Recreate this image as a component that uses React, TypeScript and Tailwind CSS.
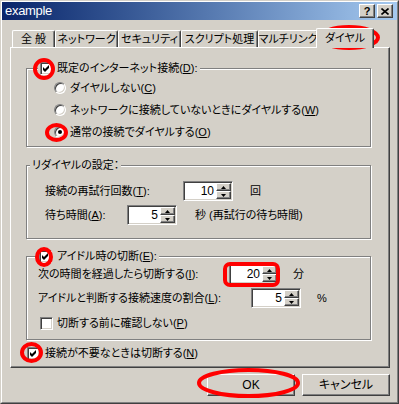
import React from "react";

const face = "bg-[#d4d0c8]";
const raised =
  "border border-t-white border-l-white border-r-[#404040] border-b-[#404040] shadow-[inset_-1px_-1px_0_#808080]";
const sunken =
  "border border-t-[#808080] border-l-[#808080] border-r-white border-b-white shadow-[inset_1px_1px_0_#404040,inset_-1px_-1px_0_#d4d0c8]";

function Check({ checked }: { checked?: boolean }) {
  return (
    <span className={`inline-flex w-[13px] h-[13px] shrink-0 bg-white ${sunken}`}>
      {checked && (
        <svg width="11" height="11" viewBox="0 0 11 11">
          <polygon points="2,4 4,6 8,2 8,5 4,9 2,7" fill="#000" />
        </svg>
      )}
    </span>
  );
}

function Radio({ checked }: { checked?: boolean }) {
  return (
    <span
      className={`inline-flex items-center justify-center w-[12px] h-[12px] shrink-0 rounded-full bg-white ${sunken}`}
    >
      {checked && <span className="w-[4px] h-[4px] rounded-full bg-black" />}
    </span>
  );
}

function Spin({ value }: { value: string }) {
  return (
    <div className={`flex w-[50px] h-[20px] shrink-0 bg-white p-[1px] ${sunken}`}>
      <div className="flex-1 text-right pr-[2px] leading-[16px] text-[12px]">{value}</div>
      <div className="flex flex-col w-[15px]">
        <div className={`flex-1 flex items-center justify-center ${face} ${raised}`}>
          <svg width="5" height="3" viewBox="0 0 5 3">
            <polygon points="0,3 2.5,0 5,3" fill="#000" />
          </svg>
        </div>
        <div className={`flex-1 flex items-center justify-center ${face} ${raised}`}>
          <svg width="5" height="3" viewBox="0 0 5 3">
            <polygon points="0,0 5,0 2.5,3" fill="#000" />
          </svg>
        </div>
      </div>
    </div>
  );
}

const group =
  "border border-[#808080] shadow-[1px_1px_0_#fff,inset_1px_1px_0_#fff] w-[345px] ml-[15px] p-0 m-0";

export default function App() {
  const tabs = [
    { label: "全般", w: "w-[43px]", extra: "tracking-[3px] pl-[3px]" },
    { label: "ネットワーク", w: "w-[63px]", extra: "" },
    { label: "セキュリティ", w: "w-[63px]", extra: "" },
    { label: "スクリプト処理", w: "w-[77px]", extra: "" },
    { label: "マルチリンク", w: "w-[60px]", extra: "" },
  ];

  return (
    <div className="relative w-[399px] h-[404px] font-['Liberation_Sans','Noto_Sans_CJK_JP',sans-serif] [font-feature-settings:'palt'] text-[11px] text-black whitespace-nowrap">
      <div className={`w-full h-full ${face} border border-t-[#d4d0c8] border-l-[#d4d0c8] border-r-[#404040] border-b-[#404040]`}>
        <div className="h-full border border-t-white border-l-white border-r-[#808080] border-b-[#808080]">
          {/* title bar */}
          <div className="h-[18px] flex items-center bg-linear-to-r from-[#0a246a] to-[#a6caf0] pl-[3px] pr-[4px]">
            <span className="text-white text-[13px] leading-[18px] tracking-[-0.3px]">example</span>
            <div className="ml-auto flex gap-[2px]">
              <div className={`w-[16px] h-[14px] ${face} ${raised} flex items-center justify-center text-[11px] font-bold leading-none`}>
                ?
              </div>
              <div className={`w-[16px] h-[14px] ${face} ${raised} flex items-center justify-center`}>
                <svg width="8" height="7" viewBox="0 0 8 7">
                  <path d="M0.5 0.5 L7.5 6.5 M7.5 0.5 L0.5 6.5" stroke="#000" strokeWidth="1.6" />
                </svg>
              </div>
            </div>
          </div>

          {/* tabs */}
          <div className="mt-[8px] h-[19px] flex items-end pl-[10px]">
            {tabs.map((t) => (
              <div
                key={t.label}
                className={`${t.w} ${t.extra} h-[17px] flex items-center justify-center leading-[14px] border-l border-t border-white border-r border-r-[#404040] rounded-t-[2px] shadow-[inset_-1px_0_0_#808080]`}
              >
                {t.label}
              </div>
            ))}
            <div className="relative z-10 w-[58px] h-[20px] -ml-[2px] -mb-[1px] flex items-center justify-center leading-[14px] bg-[#d4d0c8] border-l border-t border-white border-r border-r-[#404040] rounded-t-[2px] shadow-[inset_-1px_0_0_#808080] pb-[2px]">
              ダイヤル
            </div>
          </div>

          {/* panel */}
          <div className="ml-[8px] w-[380px] h-[321px] border-l border-t border-white border-r border-b border-r-[#404040] border-b-[#404040] shadow-[inset_-1px_-1px_0_#808080] flex flex-col">
            <fieldset className={`${group} mt-[13px]`}>
              <legend className="ml-[11px] px-[2px] bg-[#d4d0c8]">
                <span className="flex items-center gap-[4px] h-[14px] leading-[14px]">
                  <Check checked />
                  <span>
                    既定のインターネット接続(<u>D</u>):
                  </span>
                </span>
              </legend>
              <div className="pl-[27px] pt-[2px] pb-[3px]">
                <div className="h-[22px] flex items-center gap-[4px]">
                  <Radio />
                  <span>
                    ダイヤルしない(<u>C</u>)
                  </span>
                </div>
                <div className="h-[22px] flex items-center gap-[4px]">
                  <Radio />
                  <span>
                    ネットワークに接続していないときにダイヤルする(<u>W</u>)
                  </span>
                </div>
                <div className="h-[22px] flex items-center gap-[4px]">
                  <Radio checked />
                  <span>
                    通常の接続でダイヤルする(<u>O</u>)
                  </span>
                </div>
              </div>
            </fieldset>

            <fieldset className={`${group} mt-[11px]`}>
              <legend className="ml-[3px] px-[2px] bg-[#d4d0c8] h-[14px] leading-[14px]">リダイヤルの設定：</legend>
              <div className="pl-[18px] pt-[9px] pb-[13px] flex flex-col gap-[4px]">
                <div className="h-[20px] flex items-center">
                  <span className="w-[138px]">
                    接続の再試行回数(<u>T</u>):
                  </span>
                  <Spin value="10" />
                  <span className="ml-[17px]">回</span>
                </div>
                <div className="h-[20px] flex items-center">
                  <span className="w-[82px]">
                    待ち時間(<u>A</u>):
                  </span>
                  <Spin value="5" />
                  <span className="ml-[18px]">秒 (再試行の待ち時間)</span>
                </div>
              </div>
            </fieldset>

            <fieldset className={`${group} mt-[10px]`}>
              <legend className="ml-[10px] px-[2px] bg-[#d4d0c8]">
                <span className="flex items-center gap-[5px] h-[14px] leading-[14px]">
                  <Check checked />
                  <span>
                    アイドル時の切断(<u>E</u>):
                  </span>
                </span>
              </legend>
              <div className="pl-[11px] pt-[1px] pb-[6px] flex flex-col">
                <div className="h-[20px] flex items-center">
                  <span className="w-[191px]">
                    次の時間を経過したら切断する(<u>I</u>):
                  </span>
                  <Spin value="20" />
                  <span className="ml-[14px]">分</span>
                </div>
                <div className="h-[20px] mt-[4px] flex items-center">
                  <span className="w-[213px]">
                    アイドルと判断する接続速度の割合(<u>L</u>):
                  </span>
                  <Spin value="5" />
                  <span className="ml-[16px]">%</span>
                </div>
                <div className="h-[20px] mt-[5px] flex items-center gap-[4px] pl-[2px]">
                  <Check />
                  <span>
                    切断する前に確認しない(<u>P</u>)
                  </span>
                </div>
              </div>
            </fieldset>

            <div className="mt-[6px] ml-[16px] h-[14px] flex items-center gap-[5px] leading-[14px]">
              <Check checked />
              <span>
                接続が不要なときは切断する(<u>N</u>)
              </span>
            </div>
          </div>

          {/* buttons */}
          <div className="mt-[6px] ml-[8px] w-[380px] flex justify-end gap-[7px] text-[12px]">
            <button className={`w-[88px] h-[22px] ${face} ${raised} leading-[14px]`}>OK</button>
            <button className={`w-[88px] h-[22px] ${face} ${raised} leading-[14px]`}>キャンセル</button>
          </div>
        </div>
      </div>

      {/* red annotation marks */}
      <svg className="absolute left-0 top-0 pointer-events-none" width="399" height="404" fill="none" stroke="#ff0000" strokeWidth="4">
        <ellipse cx="349" cy="37.5" rx="29" ry="10.5" />
        <ellipse cx="44" cy="69" rx="9" ry="9" />
        <ellipse cx="56.5" cy="132.5" rx="9.5" ry="7.5" />
        <ellipse cx="44" cy="257" rx="7" ry="8" />
        <rect x="225" y="264" width="53" height="21" rx="5" />
        <ellipse cx="31.5" cy="352.5" rx="9.5" ry="8.5" />
        <ellipse cx="248.5" cy="383" rx="49.5" ry="13" />
      </svg>
    </div>
  );
}
